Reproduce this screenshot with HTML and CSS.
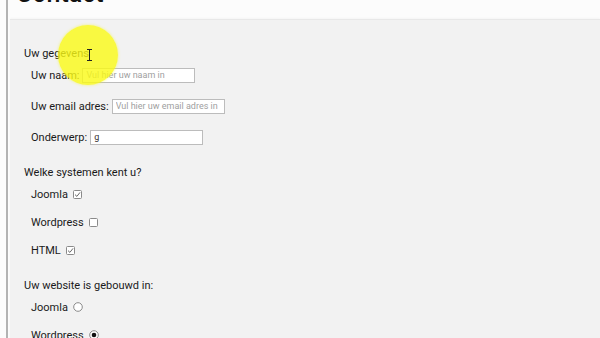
FILE: index.html
```html
<!DOCTYPE html>
<html lang="nl">
<head>
<meta charset="UTF-8">
<title>Contact</title>
<link rel="stylesheet" href="styles.css">
</head>
<body>

<div class="page">
  <h1 class="title">Contact</h1>

  <form class="panel">
    <!-- gegevens -->
    <div class="group">
      <div class="legend">Uw gegevens</div>
      <label class="row text"><span>Uw naam:</span><input type="text" placeholder="Vul hier uw naam in"></label>
      <label class="row text"><span>Uw email adres:</span><input type="text" placeholder="Vul hier uw email adres in"></label>
      <label class="row text"><span>Onderwerp:</span><input type="text" value="g"></label>
    </div>

    <!-- systemen -->
    <div class="group">
      <div class="legend">Welke systemen kent u?</div>
      <label class="row check"><span>Joomla</span>
        <svg class="box" width="9" height="9" viewBox="0 0 9 9"><rect x=".5" y=".5" width="8" height="8" rx="1"/><path d="M2 4.6 L3.9 6.4 L7 2.4"/></svg>
      </label>
      <label class="row check"><span>Wordpress</span>
        <svg class="box" width="9" height="9" viewBox="0 0 9 9"><rect x=".5" y=".5" width="8" height="8" rx="1"/></svg>
      </label>
      <label class="row check"><span>HTML</span>
        <svg class="box" width="9" height="9" viewBox="0 0 9 9"><rect x=".5" y=".5" width="8" height="8" rx="1"/><path d="M2 4.6 L3.9 6.4 L7 2.4"/></svg>
      </label>
    </div>

    <!-- gebouwd in -->
    <div class="group">
      <div class="legend">Uw website is gebouwd in:</div>
      <label class="row check"><span>Joomla</span>
        <svg class="radio" width="10" height="10" viewBox="0 0 10 10"><circle cx="5" cy="5" r="4.3"/></svg>
      </label>
      <label class="row check"><span>Wordpress</span>
        <svg class="radio" width="10" height="10" viewBox="0 0 10 10"><circle cx="5" cy="5" r="4.3"/><circle class="dot" cx="5" cy="5" r="2.3"/></svg>
      </label>
    </div>
  </form>
</div>

<div class="highlight"></div>
<svg class="cursor" width="7" height="12" viewBox="0 0 7 12"><path d="M1 .5h5M3.5 .5v11M1 11.5h5"/></svg>

</body>
</html>
```

FILE: styles.css
```css
html,body{margin:0;height:100%;}
body{background:#fcfcfc;font-family:Roboto,"Liberation Sans",sans-serif;color:#1a1a1a;overflow:hidden;}
.page{margin-left:6px;border-left:2px solid #b3b3b3;padding-left:2px;min-height:100%;}
.title{margin:-21px 0 10px 6px;font:500 25px/30px Roboto,sans-serif;color:#111;}
.panel{background:#f2f2f2;border-top:1px solid #e8e8e8;box-shadow:0 -1px 2px rgba(0,0,0,.03);padding:26px 14px 40px;min-height:400px;}
.group{margin-bottom:18px;}
.legend{font-size:11px;line-height:16px;margin-bottom:3px;}
.row{display:flex;align-items:center;height:20px;padding-left:7px;font-size:11px;}
.row.text{gap:3px;margin-bottom:11px;}
.row.check{gap:5px;margin-bottom:8px;}
.row:last-child{margin-bottom:0;}
.row input{box-sizing:border-box;width:113px;height:15px;border:1px solid #bcbcbc;background:#fff;padding:0 3px;font:9px Roboto,sans-serif;color:#333;outline:none;}
.row input::placeholder{color:#a0a0a0;}
.box rect{fill:#fff;stroke:#8a8a8a;stroke-width:1;}
.box path{fill:none;stroke:#666;stroke-width:1;}
.radio circle{fill:#fff;stroke:#8a8a8a;stroke-width:1;}
.radio .dot{fill:#111;stroke:none;}
.highlight{position:absolute;left:58px;top:25px;width:60px;height:60px;border-radius:50%;background:rgba(250,250,20,.8);box-shadow:0 0 3px rgba(250,250,20,.6);pointer-events:none;}
.cursor{position:absolute;left:86px;top:49px;}
.cursor path{fill:none;stroke:#222;stroke-width:1;}
```
